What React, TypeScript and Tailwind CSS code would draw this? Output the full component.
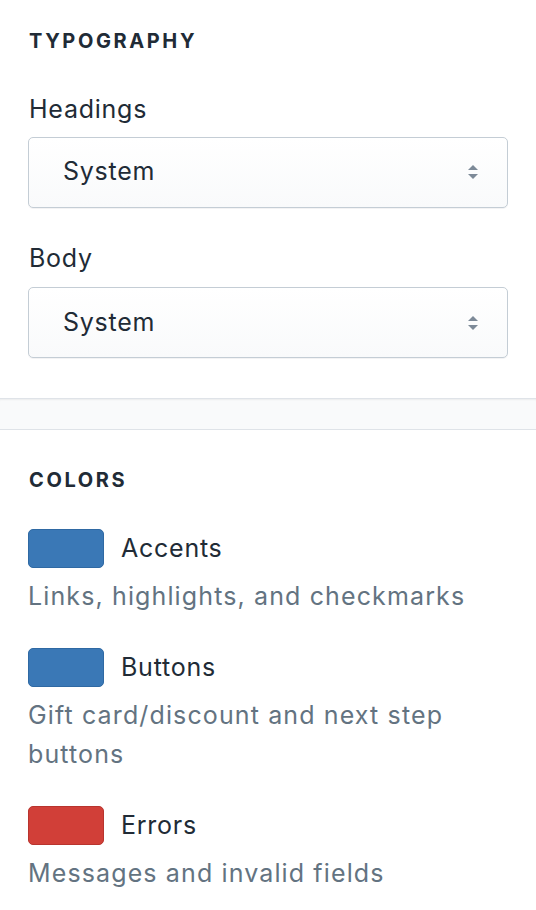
import React from "react";

const font = { fontFamily: "Inter, 'Noto Sans', sans-serif" };

function SelectBox({ value }: { value: string }) {
  return (
    <div className="relative flex h-[71px] w-[480px] items-center rounded-[5px] border border-[#c4cdd5] bg-gradient-to-b from-white to-[#f9fafb] pl-[34px] shadow-[0_1px_0_0_rgba(22,29,37,0.05)]">
      <span className="text-[25px] tracking-[0.03em] text-[#212b36]">{value}</span>
      <svg className="absolute right-[28px] top-1/2 -translate-y-1/2" width="12" height="16" viewBox="0 0 12 16">
        <path d="M6 1 L11 6 H1 Z" fill="#7d8a98" />
        <path d="M6 15 L11 10 H1 Z" fill="#7d8a98" />
      </svg>
    </div>
  );
}

function ColorRow({
  color,
  border,
  label,
  desc,
}: {
  color: string;
  border: string;
  label: string;
  desc: React.ReactNode;
}) {
  return (
    <div className="flex flex-col">
      <div className="flex items-center gap-[17px]">
        <div
          className="h-[39px] w-[76px] rounded-[5px] border"
          style={{ backgroundColor: color, borderColor: border }}
        />
        <span className="text-[25px] tracking-[0.03em] text-[#212b36]">{label}</span>
      </div>
      <p className="mt-[9px] text-[25px] leading-[39px] tracking-[0.045em] text-[#637381]">{desc}</p>
    </div>
  );
}

export default function App() {
  return (
    <div className="w-[536px] min-h-[910px] bg-white" style={font}>
      <section className="px-[28px] pt-[26px] pb-[40px]">
        <h2 className="pl-[1px] text-[20px] font-bold tracking-[0.13em] text-[#212b36]">TYPOGRAPHY</h2>

        <div className="mt-[35px]">
          <div className="pl-[1px] text-[25px] tracking-[0.03em] text-[#212b36]">Headings</div>
          <div className="mt-[8px]">
            <SelectBox value="System" />
          </div>
        </div>

        <div className="mt-[32px]">
          <div className="pl-[1px] text-[25px] tracking-[0.03em] text-[#212b36]">Body</div>
          <div className="mt-[10px]">
            <SelectBox value="System" />
          </div>
        </div>
      </section>

      <div className="h-[32px] border-y border-[#dfe3e8] bg-[#f9fafb] shadow-[inset_0_2px_2px_-1px_rgba(0,0,0,0.06)]" />

      <section className="px-[28px] pt-[35px]">
        <h2 className="pl-[1px] text-[20px] font-bold tracking-[0.13em] text-[#212b36]">COLORS</h2>
        <div className="mt-[34px] flex flex-col gap-[32px]">
          <ColorRow color="#3a78b6" border="#2f69a3" label="Accents" desc="Links, highlights, and checkmarks" />
          <ColorRow
            color="#3a78b6"
            border="#2f69a3"
            label="Buttons"
            desc={
              <>
                Gift card/discount and next step
                <br />
                buttons
              </>
            }
          />
          <ColorRow color="#d13f38" border="#b8342e" label="Errors" desc="Messages and invalid fields" />
        </div>
      </section>
    </div>
  );
}
